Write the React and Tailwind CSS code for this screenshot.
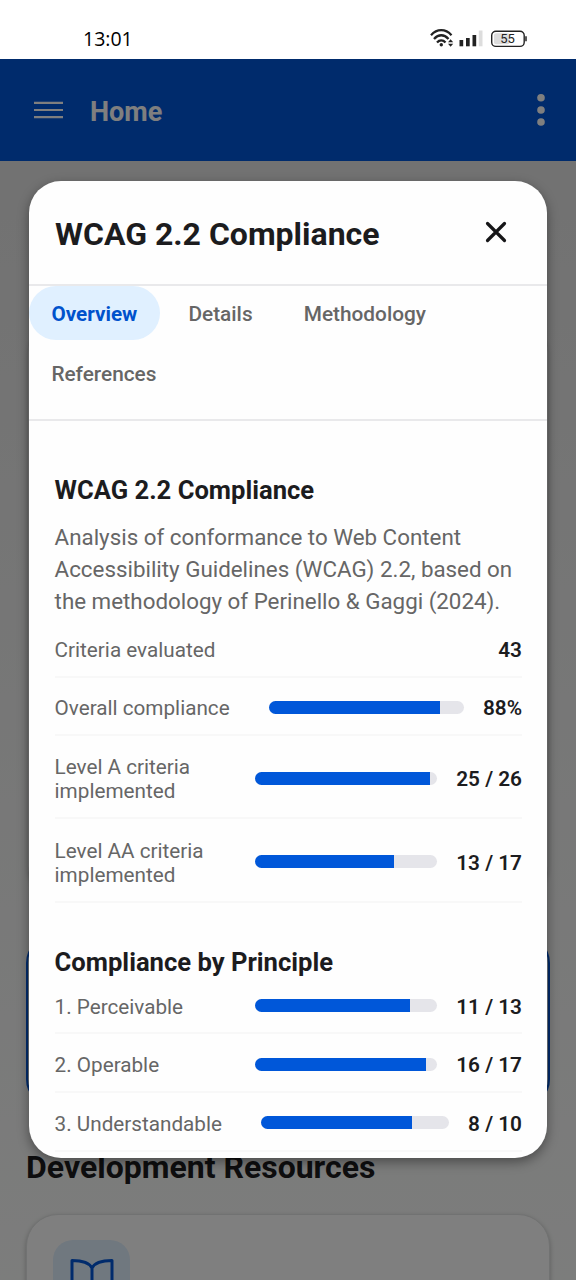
import React from "react";

const criteria = [
  { label: "Criteria evaluated", value: "43" },
  { label: "Overall compliance", value: "88%", bar: "w-[195px]", fill: 87.9, slot: "w-[58px]" },
  { label: "Level A criteria implemented", value: "25 / 26", bar: "w-[182px]", fill: 96.1, slot: "w-[85px]", tall: true },
  { label: "Level AA criteria implemented", value: "13 / 17", bar: "w-[182px]", fill: 76.2, slot: "w-[85px]", tall: true },
];

const principles = [
  { label: "1. Perceivable", value: "11 / 13", bar: "w-[182px]", fill: 85, slot: "w-[85px]" },
  { label: "2. Operable", value: "16 / 17", bar: "w-[182px]", fill: 94.2, slot: "w-[85px]" },
  { label: "3. Understandable", value: "8 / 10", bar: "w-[188px]", fill: 80.3, slot: "w-[73px]" },
];

function Row({ label, value, bar, fill, slot = "w-[58px]", tall }) {
  return (
    <div className={`flex shrink-0 items-center border-b-2 border-[#f8f8f8] pt-[3px] ${tall ? "h-[83.3px]" : "h-[58.6px]"}`}>
      <span className={`pt-[2px] text-[20.7px] leading-[24px] text-[#666] ${tall ? "w-[170px]" : "whitespace-nowrap"}`}>{label}</span>
      {bar && (
        <div className={`ml-auto h-[13px] overflow-hidden rounded-full bg-[#e5e5ea] ${bar}`}>
          <div className="h-full bg-[#0057d9]" style={{ width: `${fill}%` }} />
        </div>
      )}
      <span className={`pt-[2px] text-right text-[20.8px] font-semibold leading-[24px] whitespace-nowrap text-[#1c1c1e] ${slot} ${bar ? "" : "ml-auto"}`}>{value}</span>
    </div>
  );
}

function StatusBar() {
  return (
    <div className="flex h-[59px] shrink-0 items-start bg-white pr-[48px] pl-[83px]">
      <span className="mt-[25px] font-['Open_Sans',sans-serif] text-[19.5px] leading-[27px] font-medium text-black">13:01</span>
      <svg className="mt-[27px] ml-auto" width="98" height="22" viewBox="0 0 98 22" fill="none">
        <g stroke="#222" strokeWidth="2.3">
          <path d="M1 8.2C7 1.5 15.500 1.500 21.500 8.200" />
          <path d="M4 12C8.500 7 14 7 18.500 12" />
          <path d="M7 15.500C9.500 12.700 13 12.700 15.500 15.500" />
        </g>
        <circle cx="11.300" cy="17.800" r="1.700" fill="#222" />
        <path d="M18 15.300L20.600 12.300L23.200 15.300ZM18 16.800L20.600 19.800L23.200 16.800Z" fill="#222" />
        <rect x="29.500" y="13" width="3.700" height="6.300" fill="#222" />
        <rect x="36" y="11" width="3.700" height="8.300" fill="#222" />
        <rect x="42.500" y="8" width="3.700" height="11.300" fill="#222" />
        <rect x="48.800" y="3.500" width="3.700" height="15.800" fill="#ddd" />
        <rect x="61.700" y="4.200" width="32.500" height="15.200" rx="4.200" stroke="#222" strokeWidth="1.400" />
        <rect x="64" y="6.300" width="15.500" height="11" rx="2" fill="#dcdcdc" />
        <path d="M96 9.300V14.300" stroke="#222" strokeWidth="1.500" />
        <text x="77.500" y="16.300" textAnchor="middle" fontFamily="Roboto" fontSize="13" fill="#222">55</text>
      </svg>
    </div>
  );
}

function Dialog() {
  return (
    <section className="absolute top-[122px] left-[29px] flex h-[977px] w-[518px] flex-col overflow-hidden rounded-[32px] bg-[#fefefe] shadow-[0_4px_12px_rgba(0,0,0,0.4)]">
      <div className="flex h-[105px] shrink-0 items-center justify-between border-b-2 border-[#e9e9eb] pt-[1px] pr-[38px] pl-[26px]">
        <h1 className="pt-[1px] text-[32px] leading-[38px] font-bold text-[#1c1c1e]">WCAG 2.2 Compliance</h1>
        <svg className="mt-[-2px]" width="26" height="26" viewBox="0 0 26 26" stroke="#161618" strokeWidth="3.200" strokeLinecap="round">
          <path d="M4.500 4.500L21.500 21.500M21.500 4.500L4.500 21.500" />
        </svg>
      </div>
      <nav className="flex h-[135px] shrink-0 flex-wrap content-start gap-[6.4px] border-b-2 border-[#e9e9eb] text-[20.8px] leading-[24px] font-medium text-[#666]">
        <button className="h-[54px] rounded-[27px] bg-[#e0f0ff] px-[22.4px] pt-px text-[20.7px] font-bold text-[#0052cc]">Overview</button>
        <button className="h-[54px] px-[22.4px] pt-px">Details</button>
        <button className="h-[54px] px-[22.4px] pt-px">Methodology</button>
        <button className="h-[54px] px-[22.4px] pt-px">References</button>
      </nav>
      <div className="flex min-h-0 flex-1 flex-col overflow-hidden pt-[54px] pr-[25px] pl-[25.6px]">
        <h2 className="text-[25.6px] leading-[30px] font-bold text-[#1c1c1e]">WCAG 2.2 Compliance</h2>
        <p className="mt-[16px] text-[22.35px] leading-[32px] whitespace-nowrap text-[#666]">
          Analysis of conformance to Web Content<br />
          Accessibility Guidelines (WCAG) 2.2, based on<br />
          the methodology of Perinello &amp; Gaggi (2024).
        </p>
        <div className="mt-[2px]">{criteria.map((c) => <Row key={c.label} {...c} />)}</div>
        <h2 className="mt-[44px] text-[25.6px] leading-[30px] font-bold text-[#1c1c1e]">Compliance by Principle</h2>
        <div className="mt-[-1px]">{principles.map((p) => <Row key={p.label} {...p} />)}</div>
      </div>
    </section>
  );
}

export default function App() {
  return (
    <div className="flex h-[1280px] w-[576px] flex-col overflow-hidden font-[Roboto,sans-serif]">
      <StatusBar />
      <div className="relative flex min-h-0 flex-1 flex-col overflow-hidden">
        <header className="flex h-[102px] shrink-0 items-center bg-[#0057d9] pr-[31px] pl-[34px] text-white">
          <svg width="29" height="20" viewBox="0 0 29 20" stroke="currentColor" strokeWidth="2.200">
            <path d="M0 2.800H29M0 10H29M0 17.200H29" />
          </svg>
          <span className="mt-[4px] ml-[27px] text-[27px] leading-[32px] font-bold">Home</span>
          <svg className="ml-auto" width="8" height="34" viewBox="0 0 8 34" fill="currentColor">
            <circle cx="4" cy="4.800" r="3.800" />
            <circle cx="4" cy="17" r="3.800" />
            <circle cx="4" cy="29" r="3.800" />
          </svg>
        </header>
        <main className="flex min-h-0 flex-1 flex-col bg-linear-to-b from-[#e4e4e4] to-[#f9faf9] px-[26px]">
          <div className="mx-[2px] mt-[160px] h-[576px] shrink-0 rounded-[32px] bg-[#f0f0f0] shadow-[0_3px_5px_rgba(0,0,0,0.2)]" />
          <div className="mt-[38px] h-[172px] shrink-0 rounded-[28px] border-2 border-[#0057d9] bg-[#e0f0ff]" />
          <h2 className="mt-[41px] shrink-0 text-[32px] leading-[38px] font-bold whitespace-nowrap text-[#1c1c1e]">Development Resources</h2>
          <div className="mt-[28px] h-[160px] shrink-0 rounded-[32px] border border-[#e2e4e4] bg-white pt-[25px] pl-[26px] shadow-[0_2px_5px_rgba(0,0,0,0.25)]">
            <div className="flex h-[77px] w-[77px] justify-center rounded-[20px] bg-[#e0f0ff] pt-[18px]">
              <svg width="44" height="42" viewBox="0 0 44 42" fill="none" stroke="#0057d9" strokeWidth="3" strokeLinejoin="round">
                <path d="M22 10C19 4 11 2.500 2 2.500V34C11 34 19 35 22 40C25 35 33 34 42 34V2.500C33 2.500 25 4 22 10ZM22 10V40" />
              </svg>
            </div>
          </div>
        </main>
        <div className="absolute inset-0 bg-black/50" />
        <Dialog />
      </div>
    </div>
  );
}
